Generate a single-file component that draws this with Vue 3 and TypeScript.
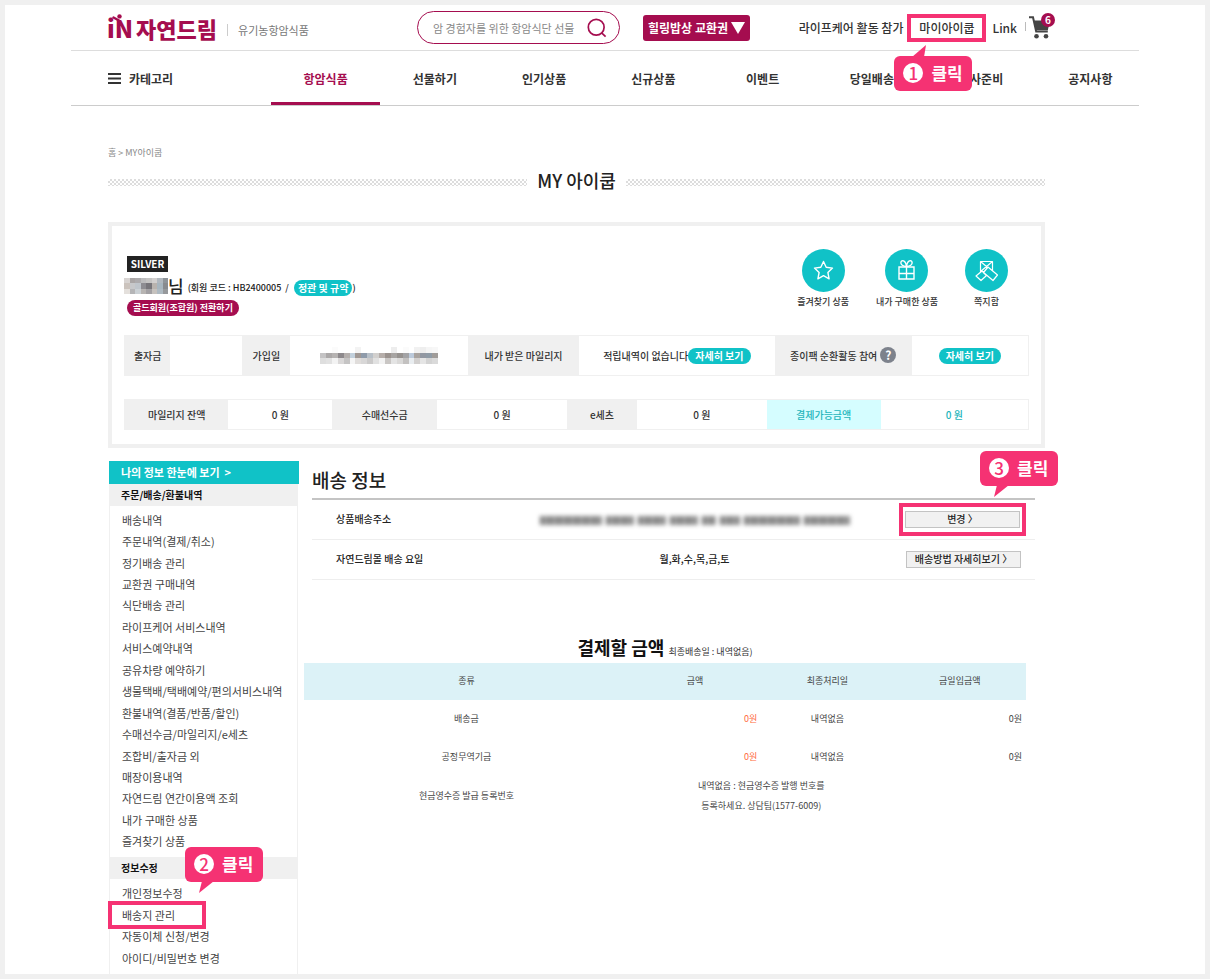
<script setup lang="ts">
interface NavItem { label: string; active?: boolean }
interface Cell { text: string; width: number; kind: 'label' | 'value' | 'accent' | 'total'; extra?: 'more' | 'help' | 'button' | 'mosaic' }

const navItems: NavItem[] = [
  { label: '항암식품', active: true },
  { label: '선물하기' },
  { label: '인기상품' },
  { label: '신규상품' },
  { label: '이벤트' },
  { label: '당일배송' },
  { label: '식사준비' },
  { label: '공지사항' },
]

const accountCells: Cell[] = [
  { text: '출자금', width: 46, kind: 'label' },
  { text: '', width: 72, kind: 'value' },
  { text: '가입일', width: 48, kind: 'label' },
  { text: '', width: 178, kind: 'value', extra: 'mosaic' },
  { text: '내가 받은 마일리지', width: 111, kind: 'label' },
  { text: '적립내역이 없습니다', width: 196, kind: 'value', extra: 'more' },
  { text: '종이팩 순환활동 참여', width: 137, kind: 'label', extra: 'help' },
  { text: '', width: 117, kind: 'value', extra: 'button' },
]

const balanceCells: Cell[] = [
  { text: '마일리지 잔액', width: 104, kind: 'label' },
  { text: '0 원', width: 104, kind: 'value' },
  { text: '수매선수금', width: 105, kind: 'label' },
  { text: '0 원', width: 130, kind: 'value' },
  { text: 'e세츠', width: 70, kind: 'label' },
  { text: '0 원', width: 130, kind: 'value' },
  { text: '결제가능금액', width: 114, kind: 'accent' },
  { text: '0 원', width: 148, kind: 'total' },
]

const orderLinks: string[] = [
  '배송내역', '주문내역(결제/취소)', '정기배송 관리', '교환권 구매내역', '식단배송 관리',
  '라이프케어 서비스내역', '서비스예약내역', '공유차량 예약하기', '생물택배/택배예약/편의서비스내역',
  '환불내역(결품/반품/할인)', '수매선수금/마일리지/e세츠', '조합비/출자금 외', '매장이용내역',
  '자연드림 연간이용액 조회', '내가 구매한 상품', '즐겨찾기 상품',
]
const infoLinks: string[] = ['개인정보수정', '배송지 관리', '자동이체 신청/변경', '아이디/비밀번호 변경']

const payments = [
  { name: '배송금', amount: '0원', last: '내역없음', today: '0원' },
  { name: '공정무역기금', amount: '0원', last: '내역없음', today: '0원' },
]

const dateMosaic: string[][] = [
  ['#fff', '#fff', '#fbfbfb', '#fff', '#fff', '#fff', '#f3f3f3', '#fff', '#fff', '#fff', '#fff', '#fff', '#ededed', '#fff', '#fbfbfb', '#fff', '#f1f1f1', '#eee', '#f5f5f5', '#f7f7f7'],
  ['#c4c3c4', '#aba8a8', '#b6b3b2', '#8d898c', '#b4afad', '#c2d0dc', '#a09894', '#8f9baa', '#b8c0c8', '#d2d0ce', '#b6aeaa', '#9b938f', '#a7a4a2', '#96928f', '#a3a3a5', '#bccadb', '#a8a39f', '#9298a2', '#8f9ba6', '#a09c99'],
  ['#dedede', '#e2e2e2', '#f3f3f3', '#dad8d8', '#c5c4c4', '#f5f5f5', '#e0dddb', '#d8d7d7', '#cbcaca', '#e1e1e1', '#f2f2f2', '#c9c6c4', '#e4e4e4', '#dad9d8', '#c3c1c0', '#e9edf0', '#d2d0cf', '#e5e5e5', '#d3d3d3', '#dadada'],
]
const nameMosaic: string[][] = [
  ['#d8d4d2', '#a9a5a5', '#adabad', '#bcbcbd', '#c5c4c3', '#d2d0cf', '#b1b8bf', '#8e9499'],
  ['#cbc3bd', '#c7c8ca', '#bfc5cb', '#8d8c91', '#77757a', '#b9b3ae', '#a8b6bf', '#888b8f'],
  ['#e4e0dc', '#b5b5b7', '#cbd1d5', '#b7b4b2', '#a2a0a3', '#c6c2be', '#aebac2', '#96999c'],
]
const maskedWords: number[] = [62, 28, 28, 28, 14, 20, 56, 46]
</script>

<template>
  <div class="frame">
    <header class="header">
      <div class="top">
        <div class="brand">
          <a href="#" class="logo" aria-label="iN 자연드림">
            <span class="mark">iN<svg class="sprout" viewBox="0 0 12 9" aria-hidden="true"><path d="M1.500 3.500l5.500 3" fill="none" stroke="#a50d4f" stroke-width="2.400" stroke-linecap="round" /><circle cx="7.500" cy="2.400" r="2.200" fill="#a50d4f" /></svg></span>
            <span class="word">자연드림</span>
          </a>
          <span class="tagline">유기농항암식품</span>
        </div>
        <form class="search" @submit.prevent>
          <input type="search" aria-label="검색" placeholder="암 경험자를 위한 항암식단 선물" />
          <button type="submit" aria-label="검색하기">
            <svg width="20" height="20" viewBox="0 0 20 20" fill="none" stroke="#a50d4f" stroke-width="1.7"><circle cx="9.2" cy="9.2" r="7.9" /><path d="M14.6 14.8l4 3.8" /></svg>
          </button>
        </form>
        <button type="button" class="promo">힐링밥상 교환권
          <svg width="14" height="12" viewBox="0 0 14 12" aria-hidden="true"><path d="M0 0h14L7 12z" fill="#fff" /></svg>
        </button>
        <nav class="utility" aria-label="회원 메뉴">
          <a href="#">라이프케어 활동 참가</a>
          <span class="target my">
            <a href="#">마이아이쿱</a>
            <span class="callout below">
              <svg class="tail" width="14" height="12" viewBox="0 0 14 12" aria-hidden="true"><path d="M14 0L0 12h12z" fill="#f53273" /></svg>
              <b class="num">1</b>클릭
            </span>
          </span>
          <a href="#" class="link">Link</a>
          <a href="#" class="cart" aria-label="장바구니">
            <svg width="22" height="24" viewBox="0 0 22 24" aria-hidden="true">
              <path d="M0 1.2h4l3.2 14.4h11.6" fill="none" stroke="#444" stroke-width="2" />
              <path d="M4.5 4.5H21l-2.2 9.8H6.8z" fill="#444" /><circle cx="7.5" cy="20.3" r="2.3" fill="#444" /><circle cx="17" cy="20.3" r="2.3" fill="#444" />
            </svg>
            <span class="count">6</span>
          </a>
        </nav>
      </div>
      <nav class="gnb" aria-label="주 메뉴">
        <button type="button" class="category">
          <svg width="13" height="11" viewBox="0 0 13 11" aria-hidden="true"><path d="M0 1h13M0 5.5h13M0 10h13" stroke="#333" stroke-width="1.8" /></svg>카테고리
        </button>
        <ul>
          <li v-for="item in navItems" :key="item.label" :class="{ active: item.active }"><a href="#">{{ item.label }}</a></li>
        </ul>
      </nav>
    </header>

    <main class="page">
      <p class="crumbs"><a href="#">홈</a> &gt; <a href="#">MY아이쿱</a></p>
      <div class="heading"><i class="dots"></i><h1>MY 아이쿱</h1><i class="dots"></i></div>

      <section class="panel">
        <div class="profile">
          <div class="who">
            <span class="grade">SILVER</span>
            <div class="name">
              <svg width="44" height="16" viewBox="0 0 8 3" preserveAspectRatio="none" shape-rendering="crispEdges" aria-hidden="true">
                <g v-for="(row, y) in nameMosaic" :key="y"><rect v-for="(c, x) in row" :key="x" :x="x" :y="y" width="1" height="1" :fill="c" /></g>
              </svg>
              <strong>님</strong>
              <span class="code">(회원 코드 : HB2400005 &nbsp;/</span>
              <button type="button" class="pill terms">정관 및 규약</button><span class="code">)</span>
            </div>
            <button type="button" class="pill gold">골드회원(조합원) 전환하기</button>
          </div>
          <div class="shortcuts">
            <a href="#">
              <svg width="43" height="43" viewBox="0 0 43 43" aria-hidden="true"><circle cx="21.5" cy="21.5" r="21.5" fill="#10c2c7" /><path d="M21.5 12.5l2.7 5.8 6.3.8-4.6 4.4 1.2 6.3-5.6-3.1-5.6 3.1 1.2-6.3-4.6-4.4 6.3-.8z" fill="none" stroke="#fff" stroke-width="1.4" stroke-linejoin="round" /></svg>
              즐겨찾기 상품
            </a>
            <a href="#">
              <svg width="43" height="43" viewBox="0 0 43 43" aria-hidden="true"><circle cx="21.5" cy="21.5" r="21.5" fill="#10c2c7" /><g fill="none" stroke="#fff" stroke-width="1.4"><path d="M14 18h15v12H14zM21.5 18v12M14 24.500h15" /><path d="M21.500 17.500c-3.500 0-6-1.800-5.600-4.200.5-2.600 4.800-2.600 5.600 4.200.8-6.800 5.100-6.800 5.600-4.200.4 2.400-2.100 4.200-5.600 4.200z" /></g></svg>
              내가 구매한 상품
            </a>
            <a href="#">
              <svg width="43" height="43" viewBox="0 0 43 43" aria-hidden="true"><circle cx="21.5" cy="21.5" r="21.5" fill="#10c2c7" /><g fill="#10c2c7" stroke="#fff" stroke-width="1.2" stroke-linejoin="round"><path d="M15.5 12.500h12v10h-12zM15.500 12.500l12 10M27.500 12.500l-12 10" /><path d="M11 27l6-5 4.500 4.500-5.500 5z" /><path d="M18.500 23.500l4.500-5.500 9.500 8-4.500 5.500z" /></g></svg>
              쪽지함
            </a>
          </div>
        </div>

        <table v-for="(cells, t) in [accountCells, balanceCells]" :key="t" :class="['summary', t ? 'balance' : 'account']">
          <colgroup><col v-for="(c, i) in cells" :key="i" :style="{ width: (c.width / 9.05) + '%' }" /></colgroup>
          <tbody>
            <tr>
              <component :is="c.kind === 'label' || c.kind === 'accent' ? 'th' : 'td'" v-for="(c, i) in cells" :key="i" :class="c.kind">
                {{ c.text }}<button v-if="c.extra === 'more' || c.extra === 'button'" type="button" class="pill more">자세히 보기</button>
                <button v-if="c.extra === 'help'" type="button" class="help" aria-label="도움말">?</button>
                <svg v-if="c.extra === 'mosaic'" width="118" height="17" viewBox="0 0 20 3" preserveAspectRatio="none" shape-rendering="crispEdges" aria-hidden="true">
                  <g v-for="(row, y) in dateMosaic" :key="y"><rect v-for="(color, x) in row" :key="x" :x="x" :y="y" width="1" height="1" :fill="color" /></g>
                </svg>
              </component>
            </tr>
          </tbody>
        </table>
      </section>

      <div class="columns">
        <aside class="side">
          <a href="#" class="overview">나의 정보 한눈에 보기 &nbsp;&gt;</a>
          <h2>주문/배송/환불내역</h2>
          <ul class="orders"><li v-for="l in orderLinks" :key="l"><a href="#">{{ l }}</a></li></ul>
          <h2>정보수정</h2>
          <ul class="infos">
            <li v-for="l in infoLinks" :key="l">
              <a href="#">{{ l }}</a>
              <span v-if="l === '배송지 관리'" class="ring">
                <span class="callout above">
                  <b class="num">2</b>클릭
                  <svg class="tail" width="15" height="12" viewBox="0 0 15 12" aria-hidden="true"><path d="M3 0h12L0 12z" fill="#f53273" /></svg>
                </span>
              </span>
            </li>
          </ul>
        </aside>

        <div class="content">
          <section class="delivery">
            <h2>배송 정보</h2>
            <table>
              <tbody>
                <tr>
                  <th>상품배송주소</th>
                  <td><span class="masked" role="img" aria-label="가려진 주소"><i v-for="(w, i) in maskedWords" :key="i" :style="{ width: w + 'px' }"></i></span></td>
                  <td class="action">
                    <span class="target change">
                      <button type="button">변경 〉</button>
                      <span class="callout above">
                        <b class="num">3</b>클릭
                        <svg class="tail" width="15" height="12" viewBox="0 0 15 12" aria-hidden="true"><path d="M3 0h12L0 12z" fill="#f53273" /></svg>
                      </span>
                    </span>
                  </td>
                </tr>
                <tr>
                  <th>자연드림몰 배송 요일</th>
                  <td>월,화,수,목,금,토</td>
                  <td class="action"><button type="button">배송방법 자세히보기 〉</button></td>
                </tr>
              </tbody>
            </table>
          </section>

          <section class="payment">
            <h2>결제할 금액 <small>최종배송일 : 내역없음)</small></h2>
            <table>
              <colgroup><col class="kind" /><col /><col /><col /></colgroup>
              <thead><tr><th>종류</th><th>금액</th><th>최종처리일</th><th>금일입금액</th></tr></thead>
              <tbody>
                <tr v-for="p in payments" :key="p.name">
                  <td>{{ p.name }}</td><td class="amount due">{{ p.amount }}</td><td>{{ p.last }}</td><td class="amount">{{ p.today }}</td>
                </tr>
                <tr class="receipt">
                  <td>현금영수증 발급 등록번호</td>
                  <td colspan="2">내역없음 : 현금영수증 발행 번호를<br />등록하세요. 상담팀(1577-6009)</td>
                  <td></td>
                </tr>
              </tbody>
            </table>
          </section>
        </div>
      </div>
    </main>
  </div>
</template>

<style>
body { margin: 0; background: #fff; }
</style>

<style scoped>
* { box-sizing: border-box; }
.frame {
  min-height: 100vh;
  border: 5px solid #f0f0f0;
  background: #fff;
  color: #333;
  font-family: "Noto Sans CJK KR", "Noto Sans", sans-serif;
  font-size: 10px;
}
a { color: inherit; text-decoration: none; }
button { font: inherit; color: inherit; border: 0; padding: 0; background: none; cursor: pointer; white-space: nowrap; }
ul { list-style: none; margin: 0; padding: 0; }
h1, h2, p { margin: 0; }
table { border-collapse: collapse; table-layout: fixed; width: 100%; }
th, td { padding: 0; text-align: center; white-space: nowrap; }

.header, .page { max-width: 1068px; margin: 0 auto; }

/* header */
.top { display: flex; align-items: center; height: 46px; border-bottom: 1px solid #ddd; }
.brand { flex: 0 0 346px; display: flex; align-items: center; padding-left: 36px; }
.logo { display: flex; align-items: center; gap: 3px; color: #a50d4f; font-weight: 900; line-height: 24px; }
.mark { position: relative; font-size: 24px; }
.sprout { position: absolute; left: 5px; top: -2px; width: 12px; height: 9px; }
.word { font-size: 22px; }
.tagline { margin-left: 10px; padding-left: 10px; border-left: 1px solid #ccc; color: #777; font-size: 11px; line-height: 12px; margin-top: 4px; }
.search { flex: 0 0 203px; display: flex; align-items: center; height: 33px; border: 1px solid #a50d4f; border-radius: 17px; padding: 0 12px 0 15px; }
.search input { flex: 1; min-width: 0; border: 0; outline: 0; padding: 0; background: none; font: inherit; font-size: 11px; color: #777; }
.search input::placeholder { color: #888; opacity: 1; }
.search button { display: flex; }
.promo { display: flex; align-items: center; gap: 3px; height: 26px; margin-left: 23px; padding: 0 5px; border-radius: 3px; background: #a50d4f; color: #fff; font-size: 12px; font-weight: 700; }
.utility { display: flex; align-items: center; margin-left: auto; margin-right: 88px; font-size: 12px; font-weight: 500; line-height: 20px; white-space: nowrap; }
.target { position: relative; display: inline-flex; align-items: center; justify-content: center; border: 4px solid #f53273; }
.my { width: 79px; height: 28px; margin-left: 4px; }
.link { margin-left: 6px; }
.cart { position: relative; display: flex; margin-left: 8px; padding-left: 4px; }
.cart::before { content: ""; position: absolute; left: 0; top: 6px; height: 9px; border-left: 1px solid #bbb; }
.count { position: absolute; left: 16px; top: -3px; width: 14px; height: 14px; border-radius: 50%; background: #a50d4f; color: #fff; font-size: 10px; font-weight: 700; line-height: 14px; text-align: center; }

.callout { position: absolute; z-index: 2; display: flex; align-items: center; gap: 8px; width: 78px; height: 35px; padding: 0 9px; border-radius: 6px; background: #f53273; color: #fff; font-size: 17px; font-weight: 700; line-height: 24px; white-space: nowrap; }
.num { width: 20px; height: 20px; border-radius: 50%; background: #fff; color: #f53273; font-size: 17px; font-weight: 500; line-height: 20px; text-align: center; }
.tail { position: absolute; }
.below { left: -17px; top: 38px; }
.below .tail { left: 18px; top: -11px; }
.above .tail { left: 14px; top: 34px; }

.gnb { display: flex; height: 55px; border-bottom: 1px solid #ccc; font-size: 12px; font-weight: 700; color: #333; }
.category { flex: 0 0 200px; display: flex; align-items: center; gap: 8px; padding-left: 37px; }
.gnb ul { flex: 1; display: grid; grid-template-columns: repeat(8, 1fr); margin-right: -6px; }
.gnb li { display: flex; align-items: center; justify-content: center; }
.gnb .active { color: #a50d4f; border-bottom: 3px solid #a50d4f; padding-top: 3px; }

/* page */
.page { padding: 0 94px 0 37px; }
.crumbs { padding-top: 40px; font-size: 9px; line-height: 14px; color: #888; }
.heading { display: flex; align-items: center; gap: 10px; margin-top: 7px; height: 26px; }
.heading h1 { color: #222; font-size: 18px; font-weight: 500; line-height: 26px; }
.dots { flex: 1; height: 7px; margin-top: 4px; background: repeating-conic-gradient(#ddd 0 25%, #fff 0 50%) 0 0 / 4px 4px; }
.panel { margin-top: 29px; padding: 0 12px 14px; border: 4px solid #f0f0f0; }
.profile { display: flex; justify-content: space-between; height: 109px; }
.who { padding-top: 30px; }
.grade { display: block; width: 41px; height: 16px; margin-left: 3px; background: #222; color: #fff; font-weight: 700; line-height: 16px; text-align: center; }
.name { display: flex; align-items: center; height: 24px; margin-top: 2px; }
.name strong { margin-right: 4px; color: #222; font-size: 17px; font-weight: 500; line-height: 20px; }
.code { color: #222; font-size: 9px; font-weight: 500; line-height: 16px; margin-top: 3px; white-space: nowrap; }
.pill { height: 16px; border-radius: 8px; background: #10c2c7; color: #fff; font-weight: 700; line-height: 16px; }
.terms { margin: 3px 0 0 5px; padding: 0 4px; }
.gold { display: block; margin: 2px 0 0 3px; padding: 0 6px; background: #a50d4f; font-size: 9px; }
.shortcuts { display: flex; gap: 27px; padding: 23px 21px 0 0; }
.shortcuts a { display: flex; flex-direction: column; align-items: center; gap: 3px; font-size: 9px; font-weight: 500; line-height: 14px; white-space: nowrap; }

.summary { border: 1px solid #f0f0f0; font-weight: 500; line-height: 16px; }
.summary th, .summary td { height: 40px; font-weight: 500; }
.summary svg { vertical-align: middle; }
.balance { margin-top: 23px; }
.balance th, .balance td { height: 30px; }
.label { background: #f0f0f0; }
.summary .accent { background: #d5fdff; color: #24b5bb; }
.total { color: #24b5bb; }
.more { padding: 0 7px; }
.help { width: 16px; height: 16px; margin-left: 3px; border-radius: 50%; background: #7d828c; color: #fff; font-size: 12px; font-weight: 700; line-height: 16px; }

.columns { display: flex; margin-top: 13px; }
.side { flex: 0 0 191px; padding-left: 1px; }
.overview { display: block; height: 23px; padding-left: 12px; background: #10c2c7; color: #fff; font-size: 11px; font-weight: 700; line-height: 23px; }
.side h2 { height: 22px; padding-left: 12px; margin-right: 1px; background: #f0f0f0; color: #111; font-size: 10px; font-weight: 700; line-height: 22px; }
.side ul { display: grid; grid-auto-rows: 1fr; margin-right: 1px; padding: 3px 0 5px 12px; border: solid #f0f0f0; border-width: 0 1px; font-size: 11px; line-height: 20px; color: #444; }
.orders { min-height: 351px; }
.infos { min-height: 95px; }
.side li { position: relative; display: flex; align-items: center; white-space: nowrap; }
.ring { position: absolute; left: -14px; top: -3px; width: 98px; height: 28px; border: 4px solid #f53273; }
.ring .callout { left: 73px; top: -58px; }

.content { flex: 1; min-width: 0; padding-left: 5px; }
.delivery { margin: 0 10px 0 8px; }
.delivery h2 { height: 37px; color: #222; font-size: 19px; font-weight: 500; line-height: 37px; }
.delivery table { border-top: 2px solid #c4c4c4; color: #222; line-height: 16px; }
.delivery tr { border-bottom: 1px solid #eee; }
.delivery th, .delivery td { height: 40px; font-weight: 500; }
.delivery th { width: 182px; padding-left: 24px; text-align: left; }
.delivery .action { width: 140px; text-align: left; padding-left: 4px; }
.action button { width: 115px; height: 17px; margin: 0 7px; border: 1px solid #c3c3c3; background: #f1f1f1; color: #222; line-height: 14px; }
.change { width: 127px; height: 33px; vertical-align: middle; }
.change button { margin: 0; flex: none; }
.change .callout { left: 77px; top: -56px; }
.masked { display: inline-flex; gap: 4px; justify-content: center; filter: blur(2px); vertical-align: middle; }
.masked i { height: 9px; background: repeating-linear-gradient(90deg, #777 0 3px, #aaa 3px 5px, #888 5px 8px, #bbb 8px 9px); }

.payment { margin: 53px 19px 0 0; }
.payment h2 { height: 30px; color: #111; font-size: 18px; font-weight: 700; line-height: 28px; text-align: center; }
.payment small { font-size: 9px; font-weight: 400; color: #333; }
.payment table { font-size: 9px; line-height: 20px; color: #444; }
.kind { width: 45%; }
.payment th { height: 37px; background: #dcf2f7; font-weight: 400; }
.payment td { height: 38px; }
.payment .amount { padding-right: 4px; text-align: right; }
.payment .due { color: #ff6b3d; }
.receipt td { height: 40px; }
</style>
